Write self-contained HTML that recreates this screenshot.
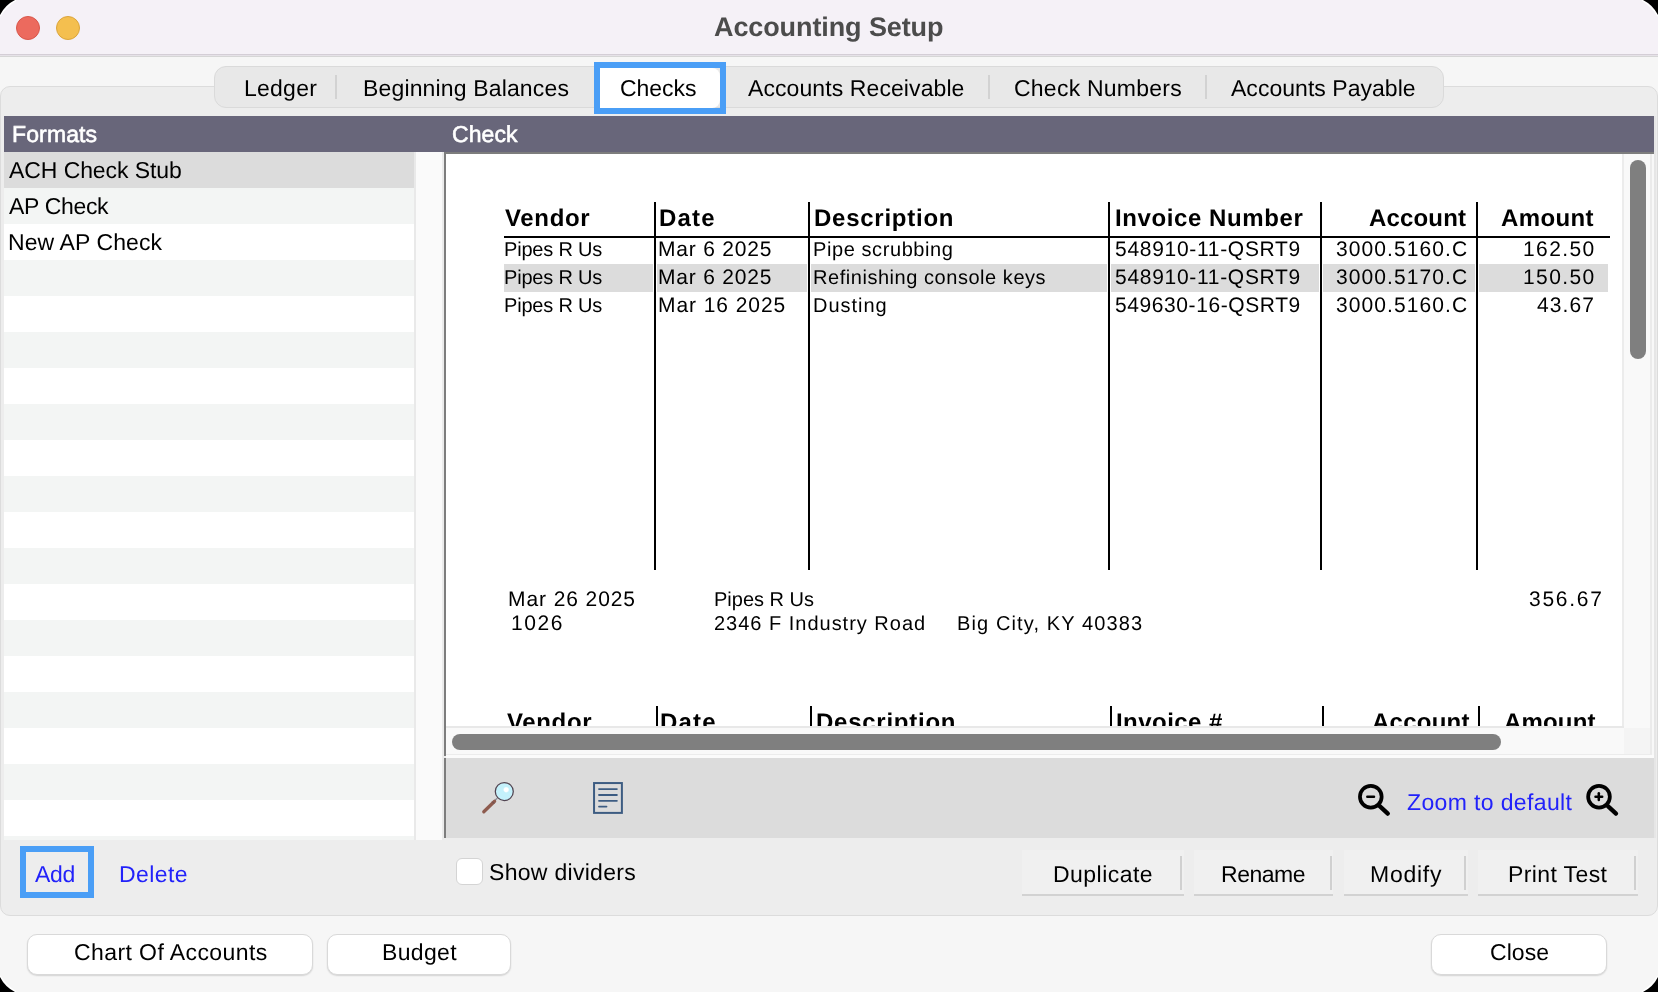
<!DOCTYPE html>
<html><head><meta charset="utf-8"><title>Accounting Setup</title>
<style>
html,body{margin:0;padding:0;background:#000;width:1658px;height:992px;overflow:hidden;}
body{font-family:"Liberation Sans",sans-serif;text-rendering:geometricPrecision;}
.win{position:absolute;left:0;top:0;width:1658px;height:992px;background:#f6f6f6;overflow:hidden;}
.t{position:absolute;white-space:nowrap;}
.r{position:absolute;box-sizing:border-box;}
.hi{z-index:2;}
.t{z-index:1;will-change:transform;}
</style></head><body>
<div class="win">
  <!-- title bar -->
  <div class="r" style="left:0;top:0;width:1658px;height:54px;background:#f5f1f7;"></div>
  <div class="r" style="left:0;top:54px;width:1658px;height:1px;background:#d4ced6;"></div>
  <div class="r" style="left:0;top:55px;width:1658px;height:1px;background:#e6e2e8;"></div>
  <div class="r" style="left:0;top:56px;width:1658px;height:1px;background:#d6d6d6;"></div>
  <div class="r" style="left:16px;top:16px;width:24px;height:24px;border-radius:50%;background:#ec6a5e;border:1px solid #d9574b;"></div>
  <div class="r" style="left:56px;top:16px;width:24px;height:24px;border-radius:50%;background:#f4bf4f;border:1px solid #dba53c;"></div>

  <!-- tab content box -->
  <div class="r" style="left:0;top:86px;width:1658px;height:830px;background:#ededed;border:1px solid #dcdcdc;border-radius:10px;"></div>

  <!-- segmented tab bar -->
  <div class="r" style="left:214px;top:66px;width:1230px;height:42px;background:#e8e8e8;border:1px solid #dadada;border-radius:12px;"></div>
  <div class="r" style="left:335px;top:75px;width:2px;height:24px;background:#d2d2d2;"></div>
  <div class="r" style="left:988px;top:75px;width:2px;height:24px;background:#d2d2d2;"></div>
  <div class="r" style="left:1205px;top:75px;width:2px;height:24px;background:#d2d2d2;"></div>
  <div class="r" style="left:600px;top:68px;width:120px;height:40px;background:#fff;border-radius:0 8px 8px 0;"></div>
  <div class="r" style="left:594px;top:62px;width:132px;height:52px;border:6px solid #4a9ef6;"></div>

  <!-- header bar -->
  <div class="r" style="left:4px;top:116px;width:1650px;height:36px;background:#68667a;"></div>

  <!-- left list -->
  <div class="r" id="list" style="left:4px;top:152px;width:410px;height:688px;background:#fff;overflow:hidden;"><div class="r" style="left:0;top:0px;width:410px;height:36px;background:#dcdcdc;"></div><div class="r" style="left:0;top:36px;width:410px;height:36px;background:#f3f5f4;"></div><div class="r" style="left:0;top:72px;width:410px;height:36px;background:#ffffff;"></div><div class="r" style="left:0;top:108px;width:410px;height:36px;background:#f3f5f4;"></div><div class="r" style="left:0;top:144px;width:410px;height:36px;background:#ffffff;"></div><div class="r" style="left:0;top:180px;width:410px;height:36px;background:#f3f5f4;"></div><div class="r" style="left:0;top:216px;width:410px;height:36px;background:#ffffff;"></div><div class="r" style="left:0;top:252px;width:410px;height:36px;background:#f3f5f4;"></div><div class="r" style="left:0;top:288px;width:410px;height:36px;background:#ffffff;"></div><div class="r" style="left:0;top:324px;width:410px;height:36px;background:#f3f5f4;"></div><div class="r" style="left:0;top:360px;width:410px;height:36px;background:#ffffff;"></div><div class="r" style="left:0;top:396px;width:410px;height:36px;background:#f3f5f4;"></div><div class="r" style="left:0;top:432px;width:410px;height:36px;background:#ffffff;"></div><div class="r" style="left:0;top:468px;width:410px;height:36px;background:#f3f5f4;"></div><div class="r" style="left:0;top:504px;width:410px;height:36px;background:#ffffff;"></div><div class="r" style="left:0;top:540px;width:410px;height:36px;background:#f3f5f4;"></div><div class="r" style="left:0;top:576px;width:410px;height:36px;background:#ffffff;"></div><div class="r" style="left:0;top:612px;width:410px;height:36px;background:#f3f5f4;"></div><div class="r" style="left:0;top:648px;width:410px;height:36px;background:#ffffff;"></div><div class="r" style="left:0;top:684px;width:410px;height:36px;background:#f3f5f4;"></div></div>
  <div class="r" style="left:414px;top:152px;width:2px;height:688px;background:#e9e9e9;"></div>
  <div class="r" style="left:416px;top:152px;width:26px;height:688px;background:#fafafa;"></div>
  <div class="r" style="left:442px;top:152px;width:2px;height:688px;background:#ebebeb;"></div>

  <!-- preview -->
  <div class="r" style="left:444px;top:152px;width:1210px;height:2px;background:#7d7d7d;"></div>
  <div class="r" style="left:444px;top:152px;width:2px;height:604px;background:#7d7d7d;"></div>
  <div class="r" style="left:446px;top:154px;width:1176px;height:572px;background:#fff;overflow:hidden;" id="pv"></div>
<div class="r" style="left:504px;top:264px;width:1104px;height:28px;background:#dcdcdc;"></div>
<div class="r" style="left:653px;top:264px;width:4px;height:28px;background:#fff;"></div>
<div class="r" style="left:654px;top:202px;width:2px;height:368px;background:#000;"></div>
<div class="r" style="left:807px;top:264px;width:4px;height:28px;background:#fff;"></div>
<div class="r" style="left:808px;top:202px;width:2px;height:368px;background:#000;"></div>
<div class="r" style="left:1107px;top:264px;width:4px;height:28px;background:#fff;"></div>
<div class="r" style="left:1108px;top:202px;width:2px;height:368px;background:#000;"></div>
<div class="r" style="left:1319px;top:264px;width:4px;height:28px;background:#fff;"></div>
<div class="r" style="left:1320px;top:202px;width:2px;height:368px;background:#000;"></div>
<div class="r" style="left:1475px;top:264px;width:4px;height:28px;background:#fff;"></div>
<div class="r" style="left:1476px;top:202px;width:2px;height:368px;background:#000;"></div>
<div class="r" style="left:504px;top:236px;width:1106px;height:2px;background:#000;"></div>
<div class="r" style="left:656px;top:706px;width:2px;height:30px;background:#000;"></div>
<div class="r" style="left:810px;top:706px;width:2px;height:30px;background:#000;"></div>
<div class="r" style="left:1110px;top:706px;width:2px;height:30px;background:#000;"></div>
<div class="r" style="left:1322px;top:706px;width:2px;height:30px;background:#000;"></div>
<div class="r" style="left:1478px;top:706px;width:2px;height:30px;background:#000;"></div>
  <!-- vertical scrollbar -->
  <div class="r hi" style="left:1622px;top:154px;width:2px;height:574px;background:#ececec;"></div>
  <div class="r hi" style="left:1624px;top:154px;width:26px;height:574px;background:#f9f9f9;"></div>
  <div class="r hi" style="left:1650px;top:154px;width:2px;height:601px;background:#ebebeb;"></div>
  <div class="r hi" style="left:1652px;top:154px;width:2px;height:604px;background:#f8f8f8;"></div>
  <div class="r hi" style="left:1654px;top:116px;width:2px;height:722px;background:#e6e6e6;"></div>
  <div class="r hi" style="left:1630px;top:160px;width:16px;height:199px;border-radius:8px;background:#7f7f7f;"></div>
  <!-- horizontal scrollbar -->
  <div class="r hi" style="left:446px;top:726px;width:1178px;height:2px;background:#e8e8e8;"></div>
  <div class="r hi" style="left:446px;top:728px;width:1178px;height:27px;background:#f9f9f9;"></div>
  <div class="r hi" style="left:1624px;top:728px;width:26px;height:27px;background:#f4f4f4;"></div>
  <div class="r hi" style="left:446px;top:754px;width:1206px;height:1px;background:#ececec;"></div>
  <div class="r hi" style="left:446px;top:755px;width:1208px;height:3px;background:#fbfbfb;"></div>
  <div class="r hi" style="left:452px;top:734px;width:1049px;height:16px;border-radius:8px;background:#7f7f7f;"></div>

  <!-- toolbar -->
  <div class="r hi" style="left:444px;top:758px;width:2px;height:80px;background:#7d7d7d;"></div>
  <div class="r hi" style="left:446px;top:758px;width:1208px;height:80px;background:#dcdcdc;"></div>

  <svg class="r" style="left:0;top:0;z-index:3;" width="1658" height="992" viewBox="0 0 1658 992">
    <defs><radialGradient id="hl"><stop offset="0" stop-color="#fff"/><stop offset="0.6" stop-color="#fff"/><stop offset="1" stop-color="#fff" stop-opacity="0"/></radialGradient></defs>
    <!-- magnifier -->
    <line x1="494.5" y1="800.8" x2="497.2" y2="798.2" stroke="#8a8f9a" stroke-width="1.2"/>
    <line x1="483.8" y1="811.8" x2="494.6" y2="801.2" stroke="#8e5b4e" stroke-width="3.3" stroke-linecap="round"/>
    <line x1="492.2" y1="801.6" x2="494.2" y2="803.6" stroke="#5d4a52" stroke-width="0.9"/>
    <circle cx="504.3" cy="791.5" r="9.0" fill="#c4f1fb" stroke="#514451" stroke-width="1.25"/>
    <circle cx="506.2" cy="789.7" r="3.2" fill="url(#hl)"/>
    <!-- document -->
    <rect x="594.05" y="783.05" width="27.85" height="29.85" fill="none" stroke="#3d5c82" stroke-width="2"/>
    <g stroke="#3d5c82" stroke-width="1.8" stroke-linecap="round">
      <line x1="599" y1="789.1" x2="616.9" y2="789.1"/>
      <line x1="599" y1="795" x2="616.9" y2="795"/>
      <line x1="599" y1="800.8" x2="616.9" y2="800.8"/>
      <line x1="599" y1="806.6" x2="606.5" y2="806.6"/>
    </g>
    <!-- zoom out -->
    <g stroke="#000" fill="none">
      <circle cx="1370.8" cy="796.7" r="10.85" stroke-width="3.75"/>
      <line x1="1379.7" y1="806.2" x2="1387.8" y2="813.6" stroke-width="4.3" stroke-linecap="round"/>
      <line x1="1367.3" y1="796.65" x2="1374" y2="796.65" stroke-width="2.5" stroke-linecap="round"/>
      <circle cx="1599" cy="796.7" r="10.85" stroke-width="3.75"/>
      <line x1="1607.9" y1="806.2" x2="1616" y2="813.6" stroke-width="4.3" stroke-linecap="round"/>
      <line x1="1595.5" y1="796.65" x2="1602.2" y2="796.65" stroke-width="2.5" stroke-linecap="round"/>
      <line x1="1598.8" y1="793.3" x2="1598.8" y2="800" stroke-width="2.5" stroke-linecap="round"/>
    </g>
  </svg>

  <!-- bottom controls -->
  <div class="r" style="left:20px;top:846px;width:74px;height:52px;border:6px solid #4a9ef6;"></div>
  <div class="r" style="left:456px;top:858px;width:27px;height:27px;background:#fff;border:1px solid #d4d4d4;border-radius:6px;"></div>

  <div class="r" style="left:1022px;top:850px;width:162px;height:46px;background:#f0f0f0;border-bottom:2px solid #d2d2d2;"></div>
  <div class="r" style="left:1180px;top:856px;width:2px;height:34px;background:#d0d0d0;"></div>
  <div class="r" style="left:1194px;top:850px;width:139px;height:46px;background:#f0f0f0;border-bottom:2px solid #d2d2d2;"></div>
  <div class="r" style="left:1330px;top:856px;width:2px;height:34px;background:#d0d0d0;"></div>
  <div class="r" style="left:1344px;top:850px;width:124px;height:46px;background:#f0f0f0;border-bottom:2px solid #d2d2d2;"></div>
  <div class="r" style="left:1464px;top:856px;width:2px;height:34px;background:#d0d0d0;"></div>
  <div class="r" style="left:1478px;top:850px;width:160px;height:46px;background:#f0f0f0;border-bottom:2px solid #d2d2d2;"></div>
  <div class="r" style="left:1634px;top:856px;width:2px;height:34px;background:#d0d0d0;"></div>

  <!-- window buttons -->
  <div class="r" style="left:27px;top:934px;width:286px;height:41px;background:#fff;border:1px solid #d9d9d9;border-radius:10px;box-shadow:0 1px 1.5px rgba(0,0,0,0.14);"></div>
  <div class="r" style="left:327px;top:934px;width:184px;height:41px;background:#fff;border:1px solid #d9d9d9;border-radius:10px;box-shadow:0 1px 1.5px rgba(0,0,0,0.14);"></div>
  <div class="r" style="left:1431px;top:934px;width:176px;height:41px;background:#fff;border:1px solid #d9d9d9;border-radius:10px;box-shadow:0 1px 1.5px rgba(0,0,0,0.14);"></div>

<div class="t" id="title" style="left:714.00px;top:14px;font-size:27px;line-height:27px;letter-spacing:-0.100px;color:#4c4c4c;font-weight:bold;">Accounting Setup</div>
<div class="t" id="t1" style="left:243.80px;top:77px;font-size:23px;line-height:23px;letter-spacing:0.248px;color:#000;">Ledger</div>
<div class="t" id="t2" style="left:363.00px;top:77px;font-size:23px;line-height:23px;letter-spacing:0.152px;color:#000;">Beginning Balances</div>
<div class="t" id="t3" style="left:620.00px;top:77px;font-size:23px;line-height:23px;letter-spacing:-0.039px;color:#000;">Checks</div>
<div class="t" id="t4" style="left:748.40px;top:77px;font-size:23px;line-height:23px;letter-spacing:0.089px;color:#000;">Accounts Receivable</div>
<div class="t" id="t5" style="left:1013.60px;top:77px;font-size:23px;line-height:23px;letter-spacing:0.235px;color:#000;">Check Numbers</div>
<div class="t" id="t6" style="left:1231.00px;top:77px;font-size:23px;line-height:23px;letter-spacing:0.032px;color:#000;">Accounts Payable</div>
<div class="t" id="h1" style="left:12.20px;top:123px;font-size:23px;line-height:23px;letter-spacing:0.127px;color:#fff;-webkit-text-stroke:0.6px #fff;">Formats</div>
<div class="t" id="h2" style="left:451.60px;top:123px;font-size:23px;line-height:23px;letter-spacing:0.077px;color:#fff;-webkit-text-stroke:0.6px #fff;">Check</div>
<div class="t" id="l1" style="left:8.50px;top:159px;font-size:23px;line-height:23px;letter-spacing:-0.081px;color:#000;">ACH Check Stub</div>
<div class="t" id="l2" style="left:8.50px;top:195px;font-size:23px;line-height:23px;letter-spacing:-0.324px;color:#000;">AP Check</div>
<div class="t" id="l3" style="left:7.80px;top:231px;font-size:23px;line-height:23px;letter-spacing:0.094px;color:#000;">New AP Check</div>
<div class="t" id="ph1" style="left:504.50px;top:207px;font-size:24px;line-height:24px;letter-spacing:0.658px;color:#000;font-weight:bold;">Vendor</div>
<div class="t" id="ph2" style="left:658.80px;top:207px;font-size:24px;line-height:24px;letter-spacing:1.176px;color:#000;font-weight:bold;">Date</div>
<div class="t" id="ph3" style="left:814.00px;top:207px;font-size:24px;line-height:24px;letter-spacing:0.744px;color:#000;font-weight:bold;">Description</div>
<div class="t" id="ph4" style="left:1114.60px;top:207px;font-size:24px;line-height:24px;letter-spacing:0.592px;color:#000;font-weight:bold;">Invoice Number</div>
<div class="t" id="ph5" style="left:1369.00px;top:207px;font-size:24px;line-height:24px;letter-spacing:0.165px;color:#000;font-weight:bold;">Account</div>
<div class="t" id="ph6" style="left:1501.00px;top:207px;font-size:24px;line-height:24px;letter-spacing:0.390px;color:#000;font-weight:bold;">Amount</div>
<div class="t" id="r1a" style="left:503.50px;top:240px;font-size:20px;line-height:20px;letter-spacing:-0.192px;color:#000;">Pipes R Us</div>
<div class="t" id="r1b" style="left:657.50px;top:239px;font-size:21px;line-height:21px;letter-spacing:0.794px;color:#000;">Mar 6 2025</div>
<div class="t" id="r1c" style="left:813.20px;top:240px;font-size:20px;line-height:20px;letter-spacing:0.586px;color:#000;">Pipe scrubbing</div>
<div class="t" id="r1d" style="left:1114.80px;top:239px;font-size:21px;line-height:21px;letter-spacing:0.699px;color:#000;">548910-11-QSRT9</div>
<div class="t" id="r1e" style="left:1336.40px;top:239px;font-size:21px;line-height:21px;letter-spacing:1.090px;color:#000;">3000.5160.C</div>
<div class="t" id="r1f" style="left:1523.00px;top:239px;font-size:21px;line-height:21px;letter-spacing:1.410px;color:#000;">162.50</div>
<div class="t" id="r2a" style="left:503.50px;top:268px;font-size:20px;line-height:20px;letter-spacing:-0.192px;color:#000;">Pipes R Us</div>
<div class="t" id="r2b" style="left:657.50px;top:267px;font-size:21px;line-height:21px;letter-spacing:0.794px;color:#000;">Mar 6 2025</div>
<div class="t" id="r2c" style="left:813.20px;top:268px;font-size:20px;line-height:20px;letter-spacing:0.543px;color:#000;">Refinishing console keys</div>
<div class="t" id="r2d" style="left:1114.80px;top:267px;font-size:21px;line-height:21px;letter-spacing:0.699px;color:#000;">548910-11-QSRT9</div>
<div class="t" id="r2e" style="left:1336.40px;top:267px;font-size:21px;line-height:21px;letter-spacing:1.090px;color:#000;">3000.5170.C</div>
<div class="t" id="r2f" style="left:1523.00px;top:267px;font-size:21px;line-height:21px;letter-spacing:1.410px;color:#000;">150.50</div>
<div class="t" id="r3a" style="left:503.50px;top:296px;font-size:20px;line-height:20px;letter-spacing:-0.192px;color:#000;">Pipes R Us</div>
<div class="t" id="r3b" style="left:657.50px;top:295px;font-size:21px;line-height:21px;letter-spacing:0.927px;color:#000;">Mar 16 2025</div>
<div class="t" id="r3c" style="left:813.20px;top:296px;font-size:20px;line-height:20px;letter-spacing:0.985px;color:#000;">Dusting</div>
<div class="t" id="r3d" style="left:1114.80px;top:295px;font-size:21px;line-height:21px;letter-spacing:0.587px;color:#000;">549630-16-QSRT9</div>
<div class="t" id="r3e" style="left:1336.40px;top:295px;font-size:21px;line-height:21px;letter-spacing:1.090px;color:#000;">3000.5160.C</div>
<div class="t" id="r3f" style="left:1537.40px;top:295px;font-size:21px;line-height:21px;letter-spacing:1.082px;color:#000;">43.67</div>
<div class="t" id="a1" style="left:507.50px;top:589px;font-size:21px;line-height:21px;letter-spacing:0.907px;color:#000;">Mar 26 2025</div>
<div class="t" id="a2" style="left:511.00px;top:613px;font-size:21px;line-height:21px;letter-spacing:1.587px;color:#000;">1026</div>
<div class="t" id="a3" style="left:713.80px;top:590px;font-size:20px;line-height:20px;letter-spacing:-0.003px;color:#000;">Pipes R Us</div>
<div class="t" id="a4" style="left:713.80px;top:614px;font-size:20px;line-height:20px;letter-spacing:0.989px;color:#000;">2346 F Industry Road</div>
<div class="t" id="a5" style="left:957.00px;top:614px;font-size:20px;line-height:20px;letter-spacing:1.126px;color:#000;">Big City, KY 40383</div>
<div class="t" id="a6" style="left:1529.40px;top:589px;font-size:21px;line-height:21px;letter-spacing:1.730px;color:#000;">356.67</div>
<div class="t" id="s1" style="left:507.20px;top:711px;font-size:24px;line-height:24px;letter-spacing:0.638px;color:#000;font-weight:bold;">Vendor</div>
<div class="t" id="s2" style="left:660.20px;top:711px;font-size:24px;line-height:24px;letter-spacing:1.176px;color:#000;font-weight:bold;">Date</div>
<div class="t" id="s3" style="left:816.40px;top:711px;font-size:24px;line-height:24px;letter-spacing:0.744px;color:#000;font-weight:bold;">Description</div>
<div class="t" id="s4" style="left:1116.00px;top:711px;font-size:24px;line-height:24px;letter-spacing:0.454px;color:#000;font-weight:bold;">Invoice #</div>
<div class="t" id="s5" style="left:1371.50px;top:711px;font-size:24px;line-height:24px;letter-spacing:0.249px;color:#000;font-weight:bold;">Account</div>
<div class="t" id="s6" style="left:1503.50px;top:711px;font-size:24px;line-height:24px;letter-spacing:0.170px;color:#000;font-weight:bold;">Amount</div>
<div class="t" id="z1" style="left:1407.20px;top:791px;font-size:23px;line-height:23px;letter-spacing:0.370px;color:#2222fa;z-index:4;">Zoom to default</div>
<div class="t" id="b1" style="left:35.00px;top:863px;font-size:23px;line-height:23px;letter-spacing:-0.316px;color:#2222fa;">Add</div>
<div class="t" id="b2" style="left:119.00px;top:863px;font-size:23px;line-height:23px;letter-spacing:0.421px;color:#2222fa;">Delete</div>
<div class="t" id="b3" style="left:489.40px;top:861px;font-size:23px;line-height:23px;letter-spacing:0.294px;color:#000;">Show dividers</div>
<div class="t" id="b4" style="left:1053.20px;top:863px;font-size:23px;line-height:23px;letter-spacing:0.463px;color:#000;">Duplicate</div>
<div class="t" id="b5" style="left:1221.00px;top:863px;font-size:23px;line-height:23px;letter-spacing:-0.469px;color:#000;">Rename</div>
<div class="t" id="b6" style="left:1370.00px;top:863px;font-size:23px;line-height:23px;letter-spacing:0.752px;color:#000;">Modify</div>
<div class="t" id="b7" style="left:1508.00px;top:863px;font-size:23px;line-height:23px;letter-spacing:0.392px;color:#000;">Print Test</div>
<div class="t" id="c1" style="left:74.00px;top:941px;font-size:23px;line-height:23px;letter-spacing:0.412px;color:#000;">Chart Of Accounts</div>
<div class="t" id="c2" style="left:381.80px;top:941px;font-size:23px;line-height:23px;letter-spacing:0.339px;color:#000;">Budget</div>
<div class="t" id="c3" style="left:1490.00px;top:941px;font-size:23px;line-height:23px;letter-spacing:0.047px;color:#000;">Close</div>
  <svg class="r" style="left:0;top:0;z-index:10;" width="1658" height="992" viewBox="0 0 1658 992">
    <g id="cn"><path d="M16,0 Q6,6 0,16" fill="none" stroke="#fff" stroke-width="1.6"/><path d="M0,0 L15,0 Q5,5 0,15 Z" fill="#000"/></g>
    <use href="#cn" transform="translate(1658,0) scale(-1,1)"/>
    <use href="#cn" transform="translate(0,992) scale(1,-1)"/>
    <use href="#cn" transform="translate(1658,992) scale(-1,-1)"/>
  </svg>

</div>
</body></html>
